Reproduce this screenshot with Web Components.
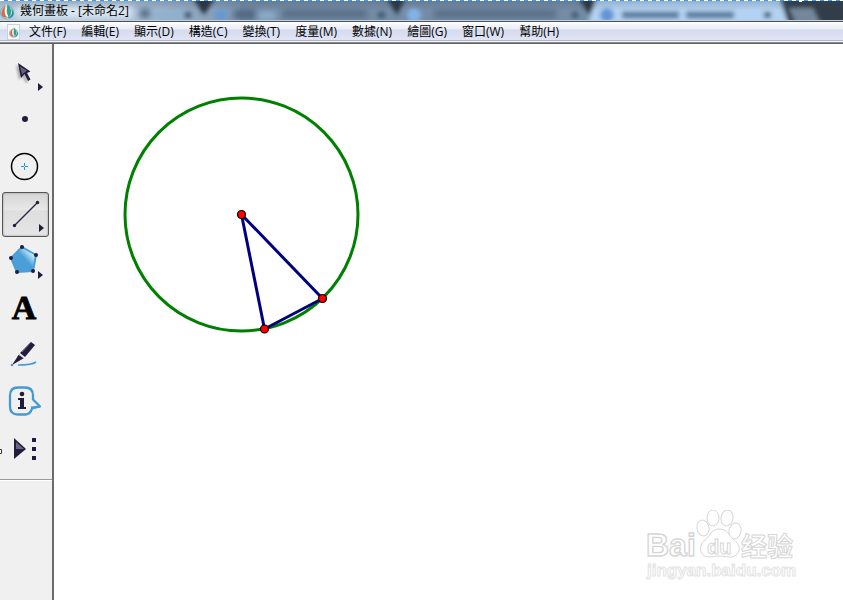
<!DOCTYPE html>
<html lang="zh-Hant">
<head>
<meta charset="utf-8">
<title>幾何畫板 - [未命名2]</title>
<style>
html, body { margin: 0; height: 100%; }
body { font: 12px/20px "Open Sans", "Noto Sans CJK TC", sans-serif; color: #000; background: #fff; overflow: hidden; }
</style>
</head>
<body>
<sketch-app></sketch-app>
<script>
const define = (name, html) => customElements.define(name, class extends HTMLElement {
  constructor() {
    super();
    this.attachShadow({ mode: 'open' }).innerHTML = html;
  }
});

define('app-logo', `
<style>:host{display:block;width:15px;height:17px;flex:none} svg{display:block;width:100%;height:100%}</style>
<svg viewBox="0 0 16 18" fill="none" aria-hidden="true">
  <circle cx="7.500" cy="10" r="7" fill="#b5cfd2" stroke="#6d9ca5" stroke-width=".8"/>
  <path d="M7 1C3 6 2 9 3 13l5 4 5-3c1-4-2-8-6-13z" fill="#e5dfca"/>
  <path d="M6 2C3 6 1 9 2 13c1 2 4 3 6 2C5 14 4 8 6 2z" fill="#df654c"/>
  <path d="M8 1c-1 5-1 10 1 14 4-3 4-8-1-14z" fill="#27a592"/>
  <path d="M12 6c2 4 1 8-5 10 7 1 10-5 5-10z" fill="#1f8fa6"/>
  <path d="M7 5c-2 4-1 7 1 9" stroke="#fff" stroke-width="1.200"/>
</svg>`);

define('title-bar', `
<style>
:host{display:block;height:21px;position:relative;overflow:hidden;background:#758ca5}
.glass{position:absolute;inset:0;width:100%;height:100%}
.row{position:relative;display:flex;gap:5px;align-items:center;padding-top:1px;height:20px}
h1{font:inherit;margin:0;line-height:20px;white-space:nowrap}
.dash{position:absolute;inset:0 0 auto;height:1px;background:repeating-linear-gradient(90deg,#fff 0 4px,#3399f5 4px 8px)}
.grip{position:absolute;right:41px;top:0;width:3px;height:2px;background:#fff}
</style>
<svg class="glass" aria-hidden="true">
  <defs>
    <filter id="b" x="-20%" y="-60%" width="140%" height="220%"><feGaussianBlur stdDeviation="3"/></filter>
    <filter id="s" x="-20%" y="-50%" width="140%" height="200%"><feGaussianBlur stdDeviation="2"/></filter>
    <linearGradient id="g"><stop stop-color="#b6cadd"/><stop offset=".55" stop-color="#a9bfd6"/><stop offset="1" stop-color="#7d95ae"/></linearGradient>
    <linearGradient id="shade" x2="0" y2="1"><stop stop-color="#33485f" stop-opacity=".25"/><stop offset=".5" stop-color="#33485f" stop-opacity="0"/></linearGradient>
  </defs>
  <rect width="240" height="21" fill="url(#g)"/>
  <g filter="url(#b)">
    <rect x="16" y="5" width="116" height="13" fill="#dce7f1"/>
    <rect x="140" y="9" width="10" height="9" fill="#506981"/>
    <path d="M154 16h32M258 16h18" stroke="#8db0cf" stroke-width="8"/>
    <rect x="234" y="10" width="22" height="9" fill="#4d647d"/>
    <path d="M282 14h85M434 14h122" stroke="#566d86" stroke-width="8"/>
  </g>
  <g filter="url(#s)">
    <path d="M593-6h188l10 34H588z" fill="#b3d1f0"/>
    <path d="M192-3h24l-12 18zM386-3h20l-9 18zM578-3h19l-7 19z" fill="#26333f"/>
    <path d="M779-4h70v30h-60z" fill="#303e4a"/>
    <path d="M789 8h24l8 18h-24z" fill="#75879a"/>
    <circle cx="221" cy="15" r="6" fill="#6698d2"/>
    <circle cx="414" cy="15" r="7" fill="#83b2e8"/>
    <circle cx="607" cy="15" r="7" fill="#6394d5"/>
    <path d="M622 15h57M686 15h48" stroke="#5d7c9e" stroke-width="7"/>
    <path d="M185 15h6M378 15h7M572 15h6M764 15h7" stroke="#3f5872" stroke-width="6"/>
  </g>
  <rect width="100%" height="21" fill="url(#shade)"/>
  <rect y="20" width="100%" height="1" fill="#c5cfdb"/>
</svg>
<div class="row"><app-logo></app-logo><h1><slot></slot></h1></div>
<div class="dash"></div><div class="grip"></div>`);

define('menu-bar', `
<style>
:host{display:block;height:23px;box-sizing:border-box;border-top:1px solid #465361;background:linear-gradient(#fff 0 1px,#f6f8fc 2px,#e8ecf5 7px,#d5dbee 8px,#dfe5f5 18px,#b1b6c9 18px 19px,#f2f2f5 19px 20px,#8e8e8e 20px 21px,#5e5e5e 21px)}
nav{display:flex;gap:15px;padding-left:7px;height:20px;align-items:center}
.doc{width:13px;height:16px;margin-right:-6px;background:#f8f8f8;border:1px solid #cbd1da;box-sizing:border-box;display:grid;place-items:center}
.doc app-logo{width:10px;height:11px}
</style>
<nav aria-label="選單"><span class="doc"><app-logo></app-logo></span><slot></slot></nav>`);

define('menu-item', `
<style>:host{display:block;flex:none} button{font:inherit;line-height:20px;color:inherit;border:0;background:none;padding:0;white-space:nowrap;display:block}</style>
<button type="button"><slot></slot></button>`);

const arrow = '<path d="M38 33l5 4-5 4z" fill="#201c3c"/>';
const icons = {
  select: `<defs><filter id="f" x="-50%" y="-50%" width="200%" height="200%"><feGaussianBlur stdDeviation="1"/></filter></defs><path d="M18 13l3 15 3-4 4 7 2-1-3-7 3-2z" fill="#777" opacity=".6" transform="translate(-2 2)" filter="url(#f)"/><path d="M18 13l3 15 3.500-4 3.500 7 2.500-1.500-3.500-6.500 3.500-1.500z" fill="#211d3d"/><path d="M20 16.500l2 8 5-4z" fill="#65617d"/>${arrow}`,
  point: '<circle cx="25" cy="22" r="3" fill="#201c3c"/>',
  circle: '<circle cx="24.500" cy="22.500" r="13" fill="none" stroke="#000" stroke-width="1.500"/><path d="M21 22.500h3m1 0h3M24.500 19v3m0 1v3" stroke="#2794d2"/>',
  line: '<path d="M14.500 34.500l23-23" stroke="#282442" stroke-width="1.300"/><circle cx="14.500" cy="34.500" r="1.700" fill="#201c3c"/><circle cx="37.500" cy="11.500" r="1.700" fill="#201c3c"/><path d="M39 33l5 4-5 4z" fill="#201c3c"/>',
  polygon: `<defs><linearGradient id="p" x1="1" x2=".4" y2=".55"><stop offset=".15" stop-color="#4b9fd9"/><stop offset=".35" stop-color="#d3edfc"/><stop offset=".8" stop-color="#4b9fd9"/></linearGradient></defs><path d="M22 9l14 8-3 16-16 1-6-14z" fill="url(#p)" stroke="#4b9fd9" stroke-width="2" stroke-linejoin="round"/><g fill="#201c3c"><circle cx="22" cy="9" r="2"/><circle cx="36" cy="17" r="2"/><circle cx="33" cy="33" r="2"/><circle cx="17" cy="34" r="2"/><circle cx="11" cy="20" r="2"/></g>${arrow}`,
  text: '<text x="24" y="34" text-anchor="middle" font-family="Liberation Serif, serif" font-weight="700" font-size="34" stroke="#000" stroke-width=".8">A</text>',
  marker: '<path d="M31 10l4 3-10 12-5-4z" fill="#211d3d"/><path d="M19 22l5 4-5 3-7 4 4-6z" fill="#211d3d"/><path d="M22 20l9-10" stroke="#77758a"/><path d="M18 22l6 4" stroke="#e8e8ee"/><path d="M18 33c7 0 14 0 18-3" fill="none" stroke="#4599d5" stroke-width="1.600"/><circle cx="12" cy="33" r="1.300" fill="#4599d5"/>',
  info: '<g transform="translate(0 1)"><path d="M18 7.500h7c5 0 8 3 8 8v4l7 7-8 2c-1 4-3 6-7 6h-7c-6 0-8-3-8-8v-11c0-5 3-8 8-8z" fill="#f0f0f0" stroke="#439bd6" stroke-width="2.300" stroke-linejoin="round"/><path d="M40 26.500l-9 1" stroke="#439bd6" stroke-width="2"/><circle cx="22" cy="14" r="2.300" fill="#201c3c"/><path d="M18 18h6v9h2v2h-8v-2h2v-7h-2z" fill="#201c3c"/></g>',
  custom: '<path d="M14 12l12 11-12 10z" fill="#211d3d"/><path d="M16 16l8 7-8 0z" fill="#69677c"/><path d="M32 12h4v4h-4zM32 21h4v4h-4zM32 30h4v4h-4z" fill="#201c3c"/><path d="M-2 23.500h3.500v4H-2" fill="#fff" stroke="#333"/>'
};

customElements.define('tool-button', class extends HTMLElement {
  constructor() { super(); this.attachShadow({ mode: 'open' }); }
  connectedCallback() {
    this.shadowRoot.innerHTML = `
<style>
:host{display:block;height:47px;position:relative}
button{box-sizing:border-box;width:100%;height:47px;border:0;background:none;padding:1px 3px 1px 2px;display:block}
button[aria-pressed=true]::before{content:"";display:block;box-sizing:border-box;height:45px;border:1px solid #555;border-radius:3px;background:linear-gradient(#d5d5d5,#e8e8e8 40%,#dedede 41%,#e5e5e5);box-shadow:inset 0 0 2px #888}
svg{position:absolute;left:0;top:0;width:52px;height:47px}
</style>
<button type="button" aria-label="${this.getAttribute('label')}" aria-pressed="${this.hasAttribute('selected')}"><svg viewBox="0 0 52 47">${icons[this.getAttribute('icon')]}</svg></button>`;
  }
});

define('tool-box', `
<style>
:host{display:block;background:#f0f0f0;border-right:2px solid #6c6c6c;width:52px;flex:none}
.tools{padding:6px 0;border-bottom:1px solid #999;box-shadow:0 1px #fff}
</style>
<div class="tools" role="toolbar" aria-label="工具箱"><slot></slot></div>`);

define('bai-watermark', `
<style>:host{display:block;width:160px;height:76px} svg{display:block;width:100%;height:100%}</style>
<svg viewBox="0 0 160 76" fill="#fff" stroke="#d6d6d6" stroke-width="1">
  <text x="4" y="46" font-family="Liberation Sans, sans-serif" font-weight="700" font-size="32" stroke-width="1.400">Bai</text>
  <g>
    <ellipse cx="61" cy="18" rx="6" ry="8" transform="rotate(-12 61 18)"/>
    <ellipse cx="71" cy="8" rx="6" ry="8"/>
    <ellipse cx="85" cy="8" rx="6" ry="8" transform="rotate(8 85 8)"/>
    <ellipse cx="93" cy="21" rx="6" ry="8" transform="rotate(15 93 21)"/>
    <path d="M77 19c-8 0-9 8-15 12-5 4-5 13 1 15 5 2 9 0 14 0 7 0 13 3 17-1 6-5 3-11-2-15-5-5-7-11-15-11z"/>
  </g>
  <text x="65" y="44" font-family="Liberation Sans, sans-serif" font-weight="700" font-size="20">du</text>
  <text x="99" y="46" font-family="Noto Sans CJK SC, sans-serif" font-weight="700" font-size="26">经验</text>
  <text x="5" y="66" font-family="Liberation Sans, sans-serif" font-weight="700" font-size="17" stroke="#e4e4e4">jingyan.baidu.com</text>
</svg>`);

define('sketch-canvas', `
<style>
:host{display:block;flex:1;min-width:0;position:relative;background:#fff;overflow:hidden}
.drawing{display:block;width:100%;height:100%}
bai-watermark{position:absolute;right:41px;bottom:14px}
</style>
<svg class="drawing" role="img" aria-label="圓與三角形">
  <circle cx="187.500" cy="170.500" r="116.500" fill="none" stroke="#008000" stroke-width="3"/>
  <path d="M187.500 170.500L268.500 254.500 210.500 285z" fill="none" stroke="#000080" stroke-width="3" stroke-linejoin="round"/>
  <g fill="#f00" stroke="#000" stroke-width="1.200"><circle cx="187.500" cy="170.500" r="4"/><circle cx="268.500" cy="254.500" r="4"/><circle cx="210.500" cy="285" r="4"/></g>
</svg>
<bai-watermark></bai-watermark>`);

define('sketch-app', `
<style>:host{display:flex;flex-direction:column;height:100vh} main{display:flex;flex:1;min-height:0}</style>
<title-bar>幾何畫板 - [未命名2]</title-bar>
<menu-bar>
  <menu-item>文件(F)</menu-item><menu-item>編輯(E)</menu-item><menu-item>顯示(D)</menu-item><menu-item>構造(C)</menu-item><menu-item>變換(T)</menu-item><menu-item>度量(M)</menu-item><menu-item>數據(N)</menu-item><menu-item>繪圖(G)</menu-item><menu-item>窗口(W)</menu-item><menu-item>幫助(H)</menu-item>
</menu-bar>
<main>
  <tool-box>
    <tool-button icon="select" label="選擇"></tool-button>
    <tool-button icon="point" label="點"></tool-button>
    <tool-button icon="circle" label="圓"></tool-button>
    <tool-button icon="line" label="線段" selected></tool-button>
    <tool-button icon="polygon" label="多邊形"></tool-button>
    <tool-button icon="text" label="文字"></tool-button>
    <tool-button icon="marker" label="標記"></tool-button>
    <tool-button icon="info" label="資訊"></tool-button>
    <tool-button icon="custom" label="自訂工具"></tool-button>
  </tool-box>
  <sketch-canvas></sketch-canvas>
</main>`);
</script>
</body>
</html>
